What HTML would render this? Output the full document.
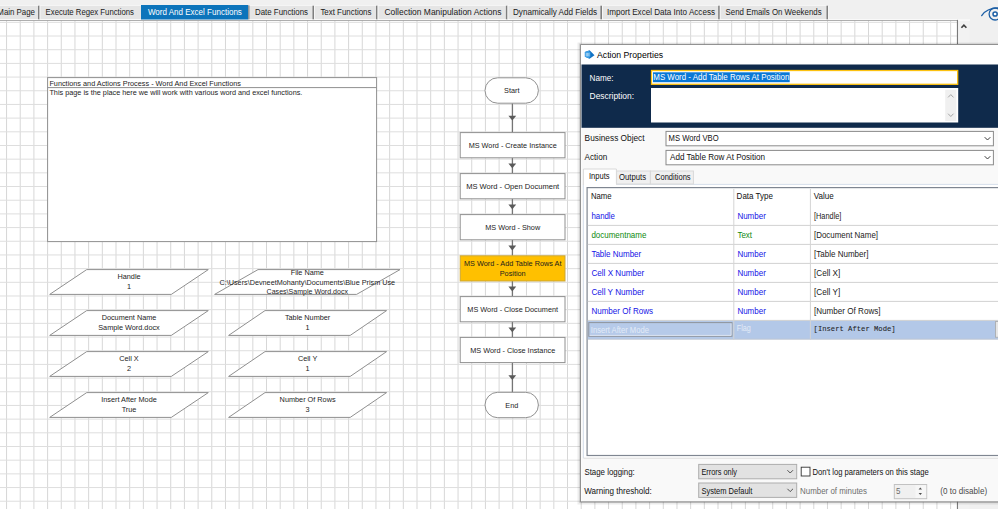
<!DOCTYPE html>
<html><head><meta charset="utf-8"><title>Action Properties</title>
<style>html,body{margin:0;padding:0;background:#f0f0f0;overflow:hidden}svg{display:block}text{white-space:pre}</style>
</head><body>
<svg width="998" height="509" viewBox="0 0 998 509" font-family='"Liberation Sans", Arial, sans-serif'>
<rect x="0" y="0" width="998" height="509" fill="#f0f0f0"/>
<rect x="0" y="20" width="957.5" height="489" fill="#fff"/>
<path d="M6.55 20.5V509M20.23 20.5V509M33.91 20.5V509M47.60 20.5V509M61.28 20.5V509M74.96 20.5V509M88.64 20.5V509M102.32 20.5V509M116.01 20.5V509M129.69 20.5V509M143.37 20.5V509M157.05 20.5V509M170.73 20.5V509M184.42 20.5V509M198.10 20.5V509M211.78 20.5V509M225.46 20.5V509M239.14 20.5V509M252.83 20.5V509M266.51 20.5V509M280.19 20.5V509M293.87 20.5V509M307.55 20.5V509M321.24 20.5V509M334.92 20.5V509M348.60 20.5V509M362.28 20.5V509M375.96 20.5V509M389.65 20.5V509M403.33 20.5V509M417.01 20.5V509M430.69 20.5V509M444.37 20.5V509M458.06 20.5V509M471.74 20.5V509M485.42 20.5V509M499.10 20.5V509M512.78 20.5V509M526.47 20.5V509M540.15 20.5V509M553.83 20.5V509M567.51 20.5V509M581.19 20.5V509M594.88 20.5V509M608.56 20.5V509M622.24 20.5V509M635.92 20.5V509M649.60 20.5V509M663.29 20.5V509M676.97 20.5V509M690.65 20.5V509M704.33 20.5V509M718.01 20.5V509M731.70 20.5V509M745.38 20.5V509M759.06 20.5V509M772.74 20.5V509M786.42 20.5V509M800.11 20.5V509M813.79 20.5V509M827.47 20.5V509M841.15 20.5V509M854.83 20.5V509M868.52 20.5V509M882.20 20.5V509M895.88 20.5V509M909.56 20.5V509M923.24 20.5V509M936.93 20.5V509M950.61 20.5V509" stroke="#d7d7d7" stroke-width="1" fill="none"/>
<path d="M0 22.35H957.5M0 36.03H957.5M0 49.71H957.5M0 63.40H957.5M0 77.08H957.5M0 90.76H957.5M0 104.44H957.5M0 118.12H957.5M0 131.81H957.5M0 145.49H957.5M0 159.17H957.5M0 172.85H957.5M0 186.53H957.5M0 200.22H957.5M0 213.90H957.5M0 227.58H957.5M0 241.26H957.5M0 254.94H957.5M0 268.63H957.5M0 282.31H957.5M0 295.99H957.5M0 309.67H957.5M0 323.35H957.5M0 337.04H957.5M0 350.72H957.5M0 364.40H957.5M0 378.08H957.5M0 391.76H957.5M0 405.45H957.5M0 419.13H957.5M0 432.81H957.5M0 446.49H957.5M0 460.17H957.5M0 473.86H957.5M0 487.54H957.5M0 501.22H957.5" stroke="#dedede" stroke-width="1" fill="none"/>
<path d="M0 20.3H957.5" stroke="#9a9a9a" stroke-width="1"/>
<path d="M957.5 20V509" stroke="#7a7a7a" stroke-width="1.2"/>
<rect x="958.2" y="20" width="11.6" height="489" fill="#f2f2f2"/>
<rect x="970" y="20" width="28" height="489" fill="#f0f0f0"/>
<path d="M958 20H970" stroke="#fff" stroke-width="1"/>
<path d="M961.4 27.8L963.9 25.1L966.4 27.8" stroke="#404040" stroke-width="1.6" fill="none"/>
<g stroke="#1d5fa5" fill="none" stroke-width="1.3" stroke-linecap="round"><path d="M981.7 15.6C985 10.6 990.5 7.9 999 7.9"/><circle cx="995.1" cy="14" r="6"/><circle cx="995.1" cy="14" r="2.1" stroke-width="1.5" fill="#fff"/></g>
<rect x="0" y="5.5" width="827.5" height="13.5" fill="#e5e5e5"/><rect x="0" y="5.2" width="827.5" height="0.8" fill="#f8f8f8"/>
<rect x="0" y="19" width="957" height="1" fill="#f9f9f9"/>
<rect x="141" y="5" width="107.2" height="14.5" fill="#0c74bb"/><rect x="248.2" y="5.4" width="1.3" height="14" fill="#8a8a8a"/>
<rect x="38.0" y="5.7" width="1.6" height="13.6" fill="#7e7e7e"/>
<rect x="39.6" y="5.7" width="0.9" height="13.3" fill="#f8f8f8"/>
<rect x="312.5" y="5.7" width="1.6" height="13.6" fill="#7e7e7e"/>
<rect x="314.09999999999997" y="5.7" width="0.9" height="13.3" fill="#f8f8f8"/>
<rect x="376.0" y="5.7" width="1.6" height="13.6" fill="#7e7e7e"/>
<rect x="377.59999999999997" y="5.7" width="0.9" height="13.3" fill="#f8f8f8"/>
<rect x="505.90000000000003" y="5.7" width="1.6" height="13.6" fill="#7e7e7e"/>
<rect x="507.5" y="5.7" width="0.9" height="13.3" fill="#f8f8f8"/>
<rect x="600.4" y="5.7" width="1.6" height="13.6" fill="#7e7e7e"/>
<rect x="602.0" y="5.7" width="0.9" height="13.3" fill="#f8f8f8"/>
<rect x="718.2" y="5.7" width="1.6" height="13.6" fill="#7e7e7e"/>
<rect x="719.8000000000001" y="5.7" width="0.9" height="13.3" fill="#f8f8f8"/>
<rect x="826.5" y="5.7" width="1.6" height="13.6" fill="#7e7e7e"/>
<rect x="828.1" y="5.7" width="0.9" height="13.3" fill="#f8f8f8"/>
<text x="35" y="15" font-size="8.4" fill="#1a1a1a" text-anchor="end" textLength="37.7" lengthAdjust="spacingAndGlyphs">Main Page</text>
<text x="45.6" y="15" font-size="8.4" fill="#1a1a1a" textLength="88.4" lengthAdjust="spacingAndGlyphs">Execute Regex Functions</text>
<text x="147.9" y="15" font-size="8.4" fill="#fff" textLength="94" lengthAdjust="spacingAndGlyphs">Word And Excel Functions</text>
<text x="255" y="15" font-size="8.4" fill="#1a1a1a" textLength="53" lengthAdjust="spacingAndGlyphs">Date Functions</text>
<text x="320.4" y="15" font-size="8.4" fill="#1a1a1a" textLength="51" lengthAdjust="spacingAndGlyphs">Text Functions</text>
<text x="384.4" y="15" font-size="8.4" fill="#1a1a1a" textLength="117" lengthAdjust="spacingAndGlyphs">Collection Manipulation Actions</text>
<text x="513" y="15" font-size="8.4" fill="#1a1a1a" textLength="84" lengthAdjust="spacingAndGlyphs">Dynamically Add Fields</text>
<text x="607" y="15" font-size="8.4" fill="#1a1a1a" textLength="108" lengthAdjust="spacingAndGlyphs">Import Excel Data Into Access</text>
<text x="725.6" y="15" font-size="8.4" fill="#1a1a1a" textLength="96" lengthAdjust="spacingAndGlyphs">Send Emails On Weekends</text>
<rect x="47.6" y="77.6" width="329" height="164" fill="#fff" stroke="#909090" stroke-width="1"/>
<path d="M47.6 87.6H376.6" stroke="#909090" stroke-width="1"/>
<text x="49.4" y="85.5" font-size="7.3" fill="#1c1c1c" textLength="191.6" lengthAdjust="spacingAndGlyphs">Functions and Actions Process - Word And Excel Functions</text>
<text x="49.4" y="95" font-size="7.3" fill="#1c1c1c" textLength="253" lengthAdjust="spacingAndGlyphs">This page is the place here we will work with various word and excel functions.</text>
<path d="M86.7 269.6H208.3L171.3 294.4H49.7Z" fill="#fff" stroke="#909090" stroke-width="1"/>
<text x="129" y="279.1" font-size="7.3" fill="#1c1c1c" text-anchor="middle">Handle</text>
<text x="129" y="289.4" font-size="7.3" fill="#1c1c1c" text-anchor="middle">1</text>
<path d="M86.7 310.6H208.3L171.3 335.4H49.7Z" fill="#fff" stroke="#909090" stroke-width="1"/>
<text x="129" y="320.1" font-size="7.3" fill="#1c1c1c" text-anchor="middle">Document Name</text>
<text x="129" y="330.4" font-size="7.3" fill="#1c1c1c" text-anchor="middle">Sample Word.docx</text>
<path d="M86.7 351.6H208.3L171.3 376.4H49.7Z" fill="#fff" stroke="#909090" stroke-width="1"/>
<text x="129" y="361.1" font-size="7.3" fill="#1c1c1c" text-anchor="middle">Cell X</text>
<text x="129" y="371.4" font-size="7.3" fill="#1c1c1c" text-anchor="middle">2</text>
<path d="M86.7 392.6H208.3L171.3 417.4H49.7Z" fill="#fff" stroke="#909090" stroke-width="1"/>
<text x="129" y="402.1" font-size="7.3" fill="#1c1c1c" text-anchor="middle">Insert After Mode</text>
<text x="129" y="412.4" font-size="7.3" fill="#1c1c1c" text-anchor="middle">True</text>
<path d="M258.0 269.6H400.0L356.6 294.4H214.6Z" fill="#fff" stroke="#909090" stroke-width="1"/>
<text x="307.3" y="275.0" font-size="7.3" fill="#1c1c1c" text-anchor="middle">File Name</text>
<text x="307.3" y="284.6" font-size="7.3" fill="#1c1c1c" text-anchor="middle" textLength="175.6" lengthAdjust="spacingAndGlyphs">C:\Users\DevneetMohanty\Documents\Blue Prism Use</text>
<text x="307.3" y="294.2" font-size="7.3" fill="#1c1c1c" text-anchor="middle" textLength="81.4" lengthAdjust="spacingAndGlyphs">Cases\Sample Word.docx</text>
<path d="M265.0 310.6H386.6L350.2 335.4H228.6Z" fill="#fff" stroke="#909090" stroke-width="1"/>
<text x="307.6" y="320.1" font-size="7.3" fill="#1c1c1c" text-anchor="middle">Table Number</text>
<text x="307.6" y="330.4" font-size="7.3" fill="#1c1c1c" text-anchor="middle">1</text>
<path d="M265.0 351.6H386.6L350.2 376.4H228.6Z" fill="#fff" stroke="#909090" stroke-width="1"/>
<text x="307.6" y="361.1" font-size="7.3" fill="#1c1c1c" text-anchor="middle">Cell Y</text>
<text x="307.6" y="371.4" font-size="7.3" fill="#1c1c1c" text-anchor="middle">1</text>
<path d="M265.0 392.6H386.6L350.2 417.4H228.6Z" fill="#fff" stroke="#909090" stroke-width="1"/>
<text x="307.6" y="402.1" font-size="7.3" fill="#1c1c1c" text-anchor="middle">Number Of Rows</text>
<text x="307.6" y="412.4" font-size="7.3" fill="#1c1c1c" text-anchor="middle">3</text>
<path d="M512.3 103.3V132.5" stroke="#5a5a5a" stroke-width="1"/>
<path d="M508.4 115.7H516.1999999999999L512.3 120.5Z" fill="#5a5a5a"/>
<path d="M512.3 157.79999999999998V173.6" stroke="#5a5a5a" stroke-width="1"/>
<path d="M508.4 163.5H516.1999999999999L512.3 168.3Z" fill="#5a5a5a"/>
<path d="M512.3 198.79999999999998V214.6" stroke="#5a5a5a" stroke-width="1"/>
<path d="M508.4 204.5H516.1999999999999L512.3 209.3Z" fill="#5a5a5a"/>
<path d="M512.3 239.79999999999998V255.79999999999998" stroke="#5a5a5a" stroke-width="1"/>
<path d="M508.4 245.6H516.1999999999999L512.3 250.4Z" fill="#5a5a5a"/>
<path d="M512.3 281.0V296.59999999999997" stroke="#5a5a5a" stroke-width="1"/>
<path d="M508.4 286.6H516.1999999999999L512.3 291.4Z" fill="#5a5a5a"/>
<path d="M512.3 321.8V337.4" stroke="#5a5a5a" stroke-width="1"/>
<path d="M508.4 327.4H516.1999999999999L512.3 332.2Z" fill="#5a5a5a"/>
<path d="M512.3 362.6V392.4" stroke="#5a5a5a" stroke-width="1"/>
<path d="M508.4 375.3H516.1999999999999L512.3 380.1Z" fill="#5a5a5a"/>
<rect x="485" y="77.8" width="53.4" height="25.4" rx="12.7" fill="#fff" stroke="#909090" stroke-width="1"/>
<text x="511.79999999999995" y="93.4" font-size="7.3" fill="#1c1c1c" text-anchor="middle">Start</text>
<rect x="460.2" y="132.6" width="104.8" height="25.2" fill="#fff" stroke="#909090" stroke-width="1"/>
<text x="512.6999999999999" y="147.8" font-size="7.3" fill="#1c1c1c" text-anchor="middle" textLength="88" lengthAdjust="spacingAndGlyphs">MS Word - Create Instance</text>
<rect x="460.2" y="173.6" width="104.8" height="25.2" fill="#fff" stroke="#909090" stroke-width="1"/>
<text x="512.6999999999999" y="188.8" font-size="7.3" fill="#1c1c1c" text-anchor="middle" textLength="93" lengthAdjust="spacingAndGlyphs">MS Word - Open Document</text>
<rect x="460.2" y="214.6" width="104.8" height="25.2" fill="#fff" stroke="#909090" stroke-width="1"/>
<text x="512.6999999999999" y="229.8" font-size="7.3" fill="#1c1c1c" text-anchor="middle">MS Word - Show</text>
<rect x="460.2" y="255.8" width="104.8" height="25.2" fill="#ffc000" stroke="#c9a63a" stroke-width="1"/>
<text x="512.6999999999999" y="266.1" font-size="7.3" fill="#1c1c1c" text-anchor="middle">MS Word - Add Table Rows At</text>
<text x="512.6999999999999" y="275.9" font-size="7.3" fill="#1c1c1c" text-anchor="middle">Position</text>
<rect x="460.2" y="296.6" width="104.8" height="25.2" fill="#fff" stroke="#909090" stroke-width="1"/>
<text x="512.6999999999999" y="311.8" font-size="7.3" fill="#1c1c1c" text-anchor="middle">MS Word - Close Document</text>
<rect x="460.2" y="337.4" width="104.8" height="25.2" fill="#fff" stroke="#909090" stroke-width="1"/>
<text x="512.6999999999999" y="352.6" font-size="7.3" fill="#1c1c1c" text-anchor="middle">MS Word - Close Instance</text>
<rect x="485" y="392.3" width="53.4" height="25.4" rx="12.7" fill="#fff" stroke="#909090" stroke-width="1"/>
<text x="511.79999999999995" y="407.9" font-size="7.3" fill="#1c1c1c" text-anchor="middle">End</text>
<rect x="577.5" y="42.5" width="420.5" height="462.1" fill="#000" opacity="0.07"/>
<rect x="579" y="43.5" width="419" height="459.6" fill="#000" opacity="0.10"/>
<rect x="580.5" y="44.5" width="417.5" height="457.1" fill="#f9f9f9"/>
<rect x="580.5" y="44.5" width="417.5" height="20" fill="#fff"/>
<rect x="580.5" y="44.5" width="1" height="457.1" fill="#fff"/>
<path d="M998 44.5H580.5V501.90000000000003H998" stroke="#787878" stroke-width="0.8" fill="none"/>
<g><path d="M584.9 52.1L589.6 50.3L594.5 55.2L589.6 58.7L584.9 56.7Z" fill="#1172c4"/><path d="M584.9 52.1L588.6 50.7L590.4 52.6V56.6L588.6 58.2L584.9 56.7Z" fill="#3c9fe6"/><path d="M586.3 52.9V56.3M587.6 52.9V56.3M588.9 53V56.2" stroke="#cfe6f8" stroke-width="0.7" fill="none"/></g>
<text x="597.1" y="58" font-size="8.9" fill="#000" textLength="66" lengthAdjust="spacingAndGlyphs">Action Properties</text>
<rect x="581.5" y="64.5" width="416.5" height="63.3" fill="#0f2a4b"/>
<text x="589.6" y="80.8" font-size="8.6" fill="#fff" textLength="24" lengthAdjust="spacingAndGlyphs">Name:</text>
<text x="589.6" y="98.8" font-size="8.6" fill="#fff" textLength="44.4" lengthAdjust="spacingAndGlyphs">Description:</text>
<rect x="651.5" y="70.5" width="306.2" height="13.8" fill="#fff" stroke="#fcc10f" stroke-width="1.3"/>
<rect x="653" y="72.3" width="136.7" height="9.9" fill="#0a78d6"/>
<text x="653.3" y="80.1" font-size="8.8" fill="#fff" textLength="136" lengthAdjust="spacingAndGlyphs">MS Word - Add Table Rows At Position</text>
<rect x="651" y="88" width="307.2" height="34.5" fill="#fff"/>
<rect x="945.2" y="89.8" width="11.2" height="31.2" fill="#f0f0f0"/>
<path d="M948.1 97.4L950.8 94.6L953.5 97.4M948.1 113.7L950.8 116.5L953.5 113.7" stroke="#a6a6a6" stroke-width="1" fill="none"/>
<text x="584.6" y="141" font-size="8.8" fill="#111" textLength="60" lengthAdjust="spacingAndGlyphs">Business Object</text>
<text x="584.6" y="159.6" font-size="8.8" fill="#111" textLength="22.6" lengthAdjust="spacingAndGlyphs">Action</text>
<rect x="666" y="131.4" width="327.4" height="14.4" fill="#fff" stroke="#8a8a8a" stroke-width="1"/>
<path d="M984.7 137.20000000000002L987.5 140.0L990.3 137.20000000000002" stroke="#3a3a3a" stroke-width="1" fill="none"/>
<rect x="666" y="150.4" width="327.4" height="14.4" fill="#fff" stroke="#8a8a8a" stroke-width="1"/>
<path d="M984.7 156.20000000000002L987.5 159.0L990.3 156.20000000000002" stroke="#3a3a3a" stroke-width="1" fill="none"/>
<text x="668.6" y="141" font-size="8.8" fill="#111" textLength="50" lengthAdjust="spacingAndGlyphs">MS Word VBO</text>
<text x="670" y="159.6" font-size="8.8" fill="#111" textLength="95" lengthAdjust="spacingAndGlyphs">Add Table Row At Position</text>
<rect x="583.4" y="184" width="414.6" height="274" fill="#fff"/>
<path d="M583.4 458V184.4H998" stroke="#d6dfeb" stroke-width="1" fill="none"/>
<path d="M583.4 458.2H998" stroke="#dcdcdc" stroke-width="1" fill="none"/>
<rect x="616.6" y="171" width="33.8" height="13" fill="#f0f0f0" stroke="#d9d9d9" stroke-width="1"/>
<rect x="650.4" y="171" width="43" height="13" fill="#f0f0f0" stroke="#d9d9d9" stroke-width="1"/>
<path d="M583.4 185V169H616.4V184.6" fill="#fff" stroke="#d9d9d9" stroke-width="1"/>
<rect x="584" y="183.6" width="32" height="2" fill="#fff"/>
<text x="589" y="178.9" font-size="8.8" fill="#111" textLength="20.6" lengthAdjust="spacingAndGlyphs">Inputs</text>
<text x="619" y="180.3" font-size="8.8" fill="#111" textLength="27" lengthAdjust="spacingAndGlyphs">Outputs</text>
<text x="655" y="180.3" font-size="8.8" fill="#111" textLength="35.6" lengthAdjust="spacingAndGlyphs">Conditions</text>
<rect x="587.1" y="187.6" width="415.9" height="267.9" fill="#fff" stroke="#7f8691" stroke-width="1.2"/>
<rect x="587.8" y="320.4" width="410.20000000000005" height="19" fill="#b3c8e8"/>
<path d="M587.8 225.4H998" stroke="#d2d2d2" stroke-width="1"/>
<path d="M587.8 244.4H998" stroke="#d2d2d2" stroke-width="1"/>
<path d="M587.8 263.4H998" stroke="#d2d2d2" stroke-width="1"/>
<path d="M587.8 282.4H998" stroke="#d2d2d2" stroke-width="1"/>
<path d="M587.8 301.4H998" stroke="#d2d2d2" stroke-width="1"/>
<path d="M587.8 320.4H998" stroke="#d2d2d2" stroke-width="1"/>
<path d="M733.8 189V339.4M810.4 189V339.4" stroke="#d4d4d4" stroke-width="1"/>
<path d="M587.8 339.2H998" stroke="#c4c8ce" stroke-width="0.8"/>
<text x="591" y="198.7" font-size="8.8" fill="#111" textLength="20.6" lengthAdjust="spacingAndGlyphs">Name</text>
<text x="736.6" y="198.7" font-size="8.8" fill="#111" textLength="36.4" lengthAdjust="spacingAndGlyphs">Data Type</text>
<text x="813.8" y="198.7" font-size="8.8" fill="#111" textLength="20" lengthAdjust="spacingAndGlyphs">Value</text>
<text x="591.4" y="218.5" font-size="8.8" fill="#1414e6" textLength="23.6" lengthAdjust="spacingAndGlyphs">handle</text>
<text x="737.4" y="218.5" font-size="8.8" fill="#1414e6" textLength="28.48" lengthAdjust="spacingAndGlyphs">Number</text>
<text x="814" y="218.5" font-size="8.8" fill="#222" textLength="27.4" lengthAdjust="spacingAndGlyphs">[Handle]</text>
<text x="591.4" y="237.5" font-size="8.8" fill="#0f8a0f" textLength="55" lengthAdjust="spacingAndGlyphs">documentname</text>
<text x="737.4" y="237.5" font-size="8.8" fill="#0f8a0f" textLength="14.69" lengthAdjust="spacingAndGlyphs">Text</text>
<text x="814" y="237.5" font-size="8.8" fill="#222" textLength="64" lengthAdjust="spacingAndGlyphs">[Document Name]</text>
<text x="591.4" y="256.5" font-size="8.8" fill="#1414e6" textLength="49.85" lengthAdjust="spacingAndGlyphs">Table Number</text>
<text x="737.4" y="256.5" font-size="8.8" fill="#1414e6" textLength="28.48" lengthAdjust="spacingAndGlyphs">Number</text>
<text x="814" y="256.5" font-size="8.8" fill="#222" textLength="54.4" lengthAdjust="spacingAndGlyphs">[Table Number]</text>
<text x="591.4" y="275.5" font-size="8.8" fill="#1414e6" textLength="52.8" lengthAdjust="spacingAndGlyphs">Cell X Number</text>
<text x="737.4" y="275.5" font-size="8.8" fill="#1414e6" textLength="28.48" lengthAdjust="spacingAndGlyphs">Number</text>
<text x="814" y="275.5" font-size="8.8" fill="#222" textLength="26.2" lengthAdjust="spacingAndGlyphs">[Cell X]</text>
<text x="591.4" y="294.5" font-size="8.8" fill="#1414e6" textLength="52.8" lengthAdjust="spacingAndGlyphs">Cell Y Number</text>
<text x="737.4" y="294.5" font-size="8.8" fill="#1414e6" textLength="28.48" lengthAdjust="spacingAndGlyphs">Number</text>
<text x="814" y="294.5" font-size="8.8" fill="#222" textLength="26.2" lengthAdjust="spacingAndGlyphs">[Cell Y]</text>
<text x="591.4" y="313.5" font-size="8.8" fill="#1414e6" textLength="61.6" lengthAdjust="spacingAndGlyphs">Number Of Rows</text>
<text x="737.4" y="313.5" font-size="8.8" fill="#1414e6" textLength="28.48" lengthAdjust="spacingAndGlyphs">Number</text>
<text x="814" y="313.5" font-size="8.8" fill="#222" textLength="66.6" lengthAdjust="spacingAndGlyphs">[Number Of Rows]</text>
<rect x="588.8" y="322.6" width="143.2" height="13.7" fill="#b6cae9" stroke="#8f949c" stroke-width="1"/><path d="M589.6 335.4H731.1V323.4" stroke="#e9eef6" stroke-width="0.8" fill="none"/>
<text x="590.8" y="332.6" font-size="8.8" fill="#e3ebf7" textLength="58.2" lengthAdjust="spacingAndGlyphs">Insert After Mode</text>
<text x="736.8" y="330.5" font-size="8.8" fill="#e3ebf7" textLength="14" lengthAdjust="spacingAndGlyphs">Flag</text>
<text x="813.6" y="331" font-size="8.1" fill="#1c1c1c" textLength="82" lengthAdjust="spacingAndGlyphs" font-family='"Liberation Mono", monospace' stroke="#1c1c1c" stroke-width="0.08">[Insert After Mode]</text>
<rect x="995.6" y="321.6" width="6" height="15.6" fill="#e6e6e6" stroke="#a8a8a8" stroke-width="0.8"/>
<text x="584.4" y="474.8" font-size="8.8" fill="#111" textLength="50.4" lengthAdjust="spacingAndGlyphs">Stage logging:</text>
<text x="584.3" y="493.6" font-size="8.8" fill="#111" textLength="67.4" lengthAdjust="spacingAndGlyphs">Warning threshold:</text>
<rect x="698.7" y="464.4" width="98" height="14.4" fill="#e2e2e2" stroke="#adadad" stroke-width="1"/>
<path d="M787.4 470.2L790.2 473.0L793 470.2" stroke="#444" stroke-width="0.9" fill="none"/>
<rect x="698.7" y="483" width="98" height="14.4" fill="#e2e2e2" stroke="#adadad" stroke-width="1"/>
<path d="M787.4 488.8L790.2 491.6L793 488.8" stroke="#444" stroke-width="0.9" fill="none"/>
<text x="701.4" y="474.8" font-size="8.8" fill="#111" textLength="35.6" lengthAdjust="spacingAndGlyphs">Errors only</text>
<text x="701.4" y="493.6" font-size="8.8" fill="#111" textLength="51" lengthAdjust="spacingAndGlyphs">System Default</text>
<rect x="801.2" y="467.2" width="8.8" height="8.8" fill="#fff" stroke="#333" stroke-width="0.9"/>
<text x="812.5" y="475" font-size="8.8" fill="#111" textLength="116.2" lengthAdjust="spacingAndGlyphs">Don't log parameters on this stage</text>
<text x="800" y="493.5" font-size="8.8" fill="#6d6d6d" textLength="67" lengthAdjust="spacingAndGlyphs">Number of minutes</text>
<rect x="894.3" y="484.5" width="32.4" height="14.2" fill="#f0f0f0" stroke="#c2c2c2" stroke-width="1"/>
<rect x="915.4" y="485.2" width="10.8" height="12.8" fill="#f6f6f6"/>
<path d="M918.6 489.6L920.3 487.4L922 489.6ZM918.6 492.9L920.3 495.1L922 492.9Z" fill="#505050"/>
<text x="896" y="493.6" font-size="8.8" fill="#6d6d6d" textLength="4.45" lengthAdjust="spacingAndGlyphs">5</text>
<text x="940.3" y="493.5" font-size="8.8" fill="#4a4a4a" textLength="46.8" lengthAdjust="spacingAndGlyphs">(0 to disable)</text>
</svg>
</body></html>
